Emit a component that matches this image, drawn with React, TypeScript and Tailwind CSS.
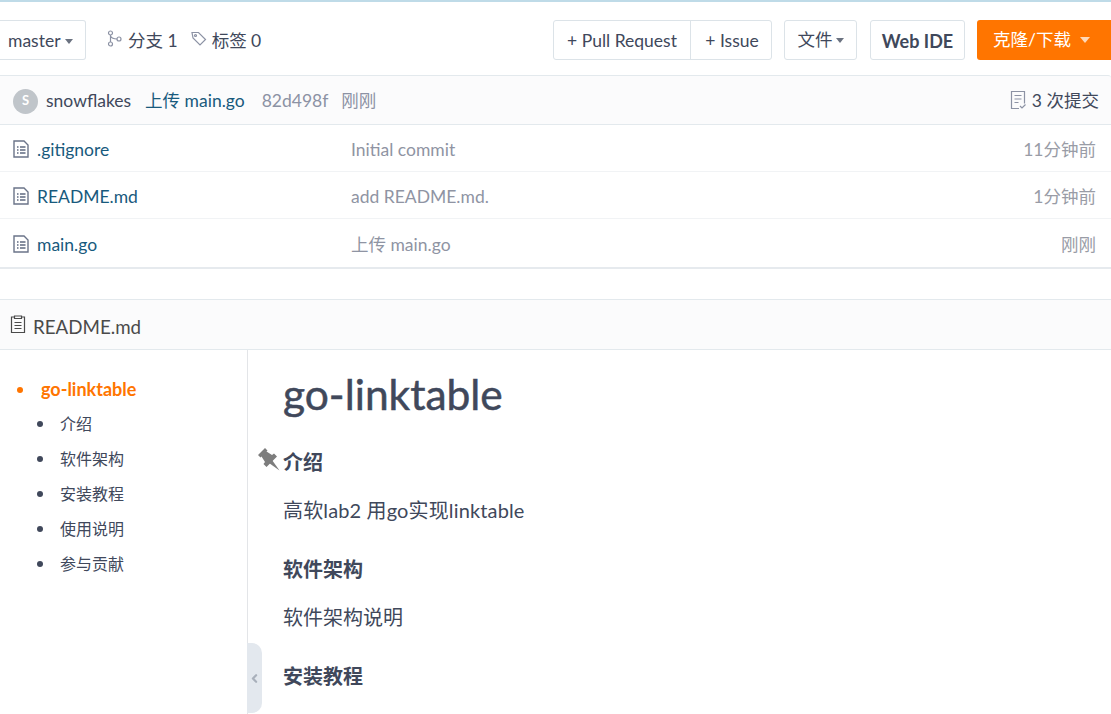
import { ChevronLeft } from "lucide-react";

const font = "font-['Lato','Noto_Sans_CJK_SC',sans-serif]";

function Caret({ className }: { className: string }) {
  return <span className={"inline-block w-0 h-0 border-x-[4px] border-x-transparent border-t-[5px] " + className} />;
}

function FileIcon() {
  return (
    <svg width="16" height="18" viewBox="0 0 16 18" fill="none" className="shrink-0 -mt-[3px]">
      <path d="M1 1h10l4 4v12H1z" stroke="#6b7489" strokeWidth="1.4" />
      <path d="M4 7h1.500M7 7h5.500M4 10h1.500M7 10h5.500M4 13h1.500M7 13h5.500" stroke="#5f6980" strokeWidth="1.4" />
    </svg>
  );
}

const files = [
  { name: ".gitignore", msg: "Initial commit", time: "11分钟前", h: "h-[47px]" },
  { name: "README.md", msg: "add README.md.", time: "1分钟前", h: "h-[47px]" },
  { name: "main.go", msg: "上传 main.go", time: "刚刚", h: "h-[48px]" },
];

const toc = ["介绍", "软件架构", "安装教程", "使用说明", "参与贡献"];

export default function App() {
  return (
    <div className={"w-[1111px] h-[714px] overflow-hidden bg-white text-[#40485b] text-[17.500px] " + font}>
      <div className="h-[2px] bg-[#bfdbe8]" />
      <div className="flex items-start h-[73px] pt-[18px]">
        <div className="flex items-center h-10 w-[86px] pt-[2px] pl-2 gap-[4px] border border-l-0 border-[#dce3e8] rounded-r-[3px]">
          master
          <Caret className="border-t-[#6b7280]" />
        </div>
        <div className="flex items-center h-10 pt-[2px] ml-[21px] gap-[6px]">
          <svg width="15" height="17" viewBox="0 0 15 17" fill="none" stroke="#8c92a4" strokeWidth="1.2" className="-mt-[5px]">
            <circle cx="3.5" cy="3" r="2" />
            <circle cx="3.5" cy="14" r="2" />
            <circle cx="12" cy="9" r="2" />
            <path d="M3.5 5v7M3.5 6c1 2 3 3 6.500 3" />
          </svg>
          分支 1
        </div>
        <div className="flex items-center h-10 pt-[2px] ml-[13px] gap-[5px]">
          <svg width="16" height="16" viewBox="0 0 16 16" fill="none" stroke="#8c92a4" strokeWidth="1.2" className="-mt-[5px]">
            <path d="M1 1.500h6.500l7 7-5.500 5.500-7-7z" />
            <circle cx="4.500" cy="4.500" r="1" />
          </svg>
          标签 0
        </div>
        <div className="ml-auto flex items-center h-10 w-[219px] border border-[#dce3e8] rounded-[3px]">
          <div className="w-[137px] h-full pt-[2px] flex items-center justify-center border-r border-[#dce3e8]">+ Pull Request</div>
          <div className="w-[80px] h-full pt-[2px] pl-[2px] flex items-center justify-center">+ Issue</div>
        </div>
        <div className="ml-3 flex items-center justify-center gap-[3px] h-10 w-[73px] pt-[1px] border border-[#dce3e8] rounded-[3px]">
          文件
          <Caret className="border-t-[#6b7280]" />
        </div>
        <div className="ml-[13px] flex items-center justify-center h-10 w-[95px] pt-[2px] border border-[#dce3e8] rounded-[3px] font-bold text-[18px]">
          Web IDE
        </div>
        <div className="ml-3 flex items-center h-10 w-[134px] pl-4 gap-[9px] rounded-l-[3px] bg-[#ff7500] text-white">
          克隆/下载
          <Caret className="border-x-[5px] border-t-[6px] border-t-[#ffd9b8]" />
        </div>
      </div>

      <div className="border-y border-[#e3e9ed] bg-[#fbfbfc] h-[50px] flex items-center pt-[2px] pl-[13px] pr-3 rounded-tr-[3px]">
        <div className="w-[25px] h-[25px] rounded-full bg-[#c0c5ca] text-white text-[13px] font-bold flex items-center justify-center">S</div>
        <span className="ml-2">snowflakes</span>
        <span className="ml-[14px] text-[#185a7d]">上传 main.go</span>
        <span className="ml-[17px] text-[#8c92a4]">82d498f</span>
        <span className="ml-[13px] text-[#8c92a4]">刚刚</span>
        <div className="ml-auto flex items-center gap-[5px]">
          <svg width="17" height="20" viewBox="0 0 17 20" fill="none" stroke="#8c92a4" strokeWidth="1.2" className="-mt-[3px]">
            <path d="M9 18.500H1.500v-17h13v12M4.500 5.500h7M4.500 9h7M4.500 12.500h4M10 16l2 2 3.500-3.500" />
          </svg>
          3 次提交
        </div>
      </div>

      <div className="border-b-2 border-[#e6eaee]">
        {files.map((f, i) => (
          <div key={f.name} className={"flex items-center pt-[4px] pl-[13px] pr-[15px] " + f.h + (i < 2 ? " border-b border-[#f1f3f5]" : "")}>
            <FileIcon />
            <span className="ml-2 w-[314px] text-[#185a7d]">{f.name}</span>
            <span className="text-[#8f94a3]">{f.msg}</span>
            <span className="ml-auto text-[#999ca6]">{f.time}</span>
          </div>
        ))}
      </div>

      <div className="mt-[30px] border-y border-[#e3e9ed] bg-[#fbfbfc] h-[51px] flex items-center pt-[6px] pl-[10px] text-[18.750px] text-[#4a4a4a]">
        <svg width="16" height="19" viewBox="0 0 16 19" fill="none" stroke="#4a4a4a" strokeWidth="1.2" className="-mt-[6px]">
          <path d="M4.500 2H1.500v15.500h13V2h-3M4.500 1h7v2.500h-7zM4.500 7.500h7M4.500 10.500h7M4.500 13.500h7" />
        </svg>
        <span className="ml-[7px]">README.md</span>
      </div>

      <div className="flex h-[365px] relative">
        <div className="w-[248px] shrink-0 border-r border-[#e3e5e8] pt-[27px] pl-[17px] relative">
          <div className="flex items-center h-[25px] text-[18px] font-bold text-[#ff7500]">
            <span className="w-[6px] h-[6px] rounded-full bg-[#ff7500]" />
            <span className="ml-[18px]">go-linktable</span>
          </div>
          <div className="mt-[4.500px] ml-[20px] flex flex-col text-[16px]">
            {toc.map((t) => (
              <div key={t} className="flex items-center h-[35.100px]">
                <span className="w-[6px] h-[6px] rounded-full bg-[#40485b]" />
                <span className="ml-[17px]">{t}</span>
              </div>
            ))}
          </div>
          <div className="absolute right-[-15px] top-[293px] w-[15px] h-[70px] bg-[#e3e8ee] rounded-r-[10px] flex items-center justify-center">
            <ChevronLeft size={13} strokeWidth={4} className="text-[#a9b0bb]" />
          </div>
        </div>
        <div className="pl-[35px] relative">
          <h1 className="mt-[18px] h-[52px] text-[42.500px] leading-[52px] [-webkit-text-stroke:0.5px_#40485b]">go-linktable</h1>
          <h2 className="mt-[28px] text-[20px] leading-[28px] font-bold">介绍</h2>
          <svg width="23" height="24" viewBox="0 0 23 24" fill="#7d7d7d" className="absolute left-[10px] top-[98px]">
            <path d="M0 7L7 0l2.500 2.500-1 1L14 7l2-1.500 3 3L8.500 19l-3-3L7 14 3.500 8.500l-1 1z" />
            <path d="M11 15l10.500 7.500L14 12z" />
          </svg>
          <p className="mt-[20px] text-[20px] leading-[28px] tracking-[0.14px]">高软lab2 用go实现linktable</p>
          <h2 className="mt-[31px] text-[20px] leading-[28px] font-bold">软件架构</h2>
          <p className="mt-[20px] text-[20px] leading-[28px]">软件架构说明</p>
          <h2 className="mt-[31px] text-[20px] leading-[28px] font-bold">安装教程</h2>
        </div>
      </div>
    </div>
  );
}
